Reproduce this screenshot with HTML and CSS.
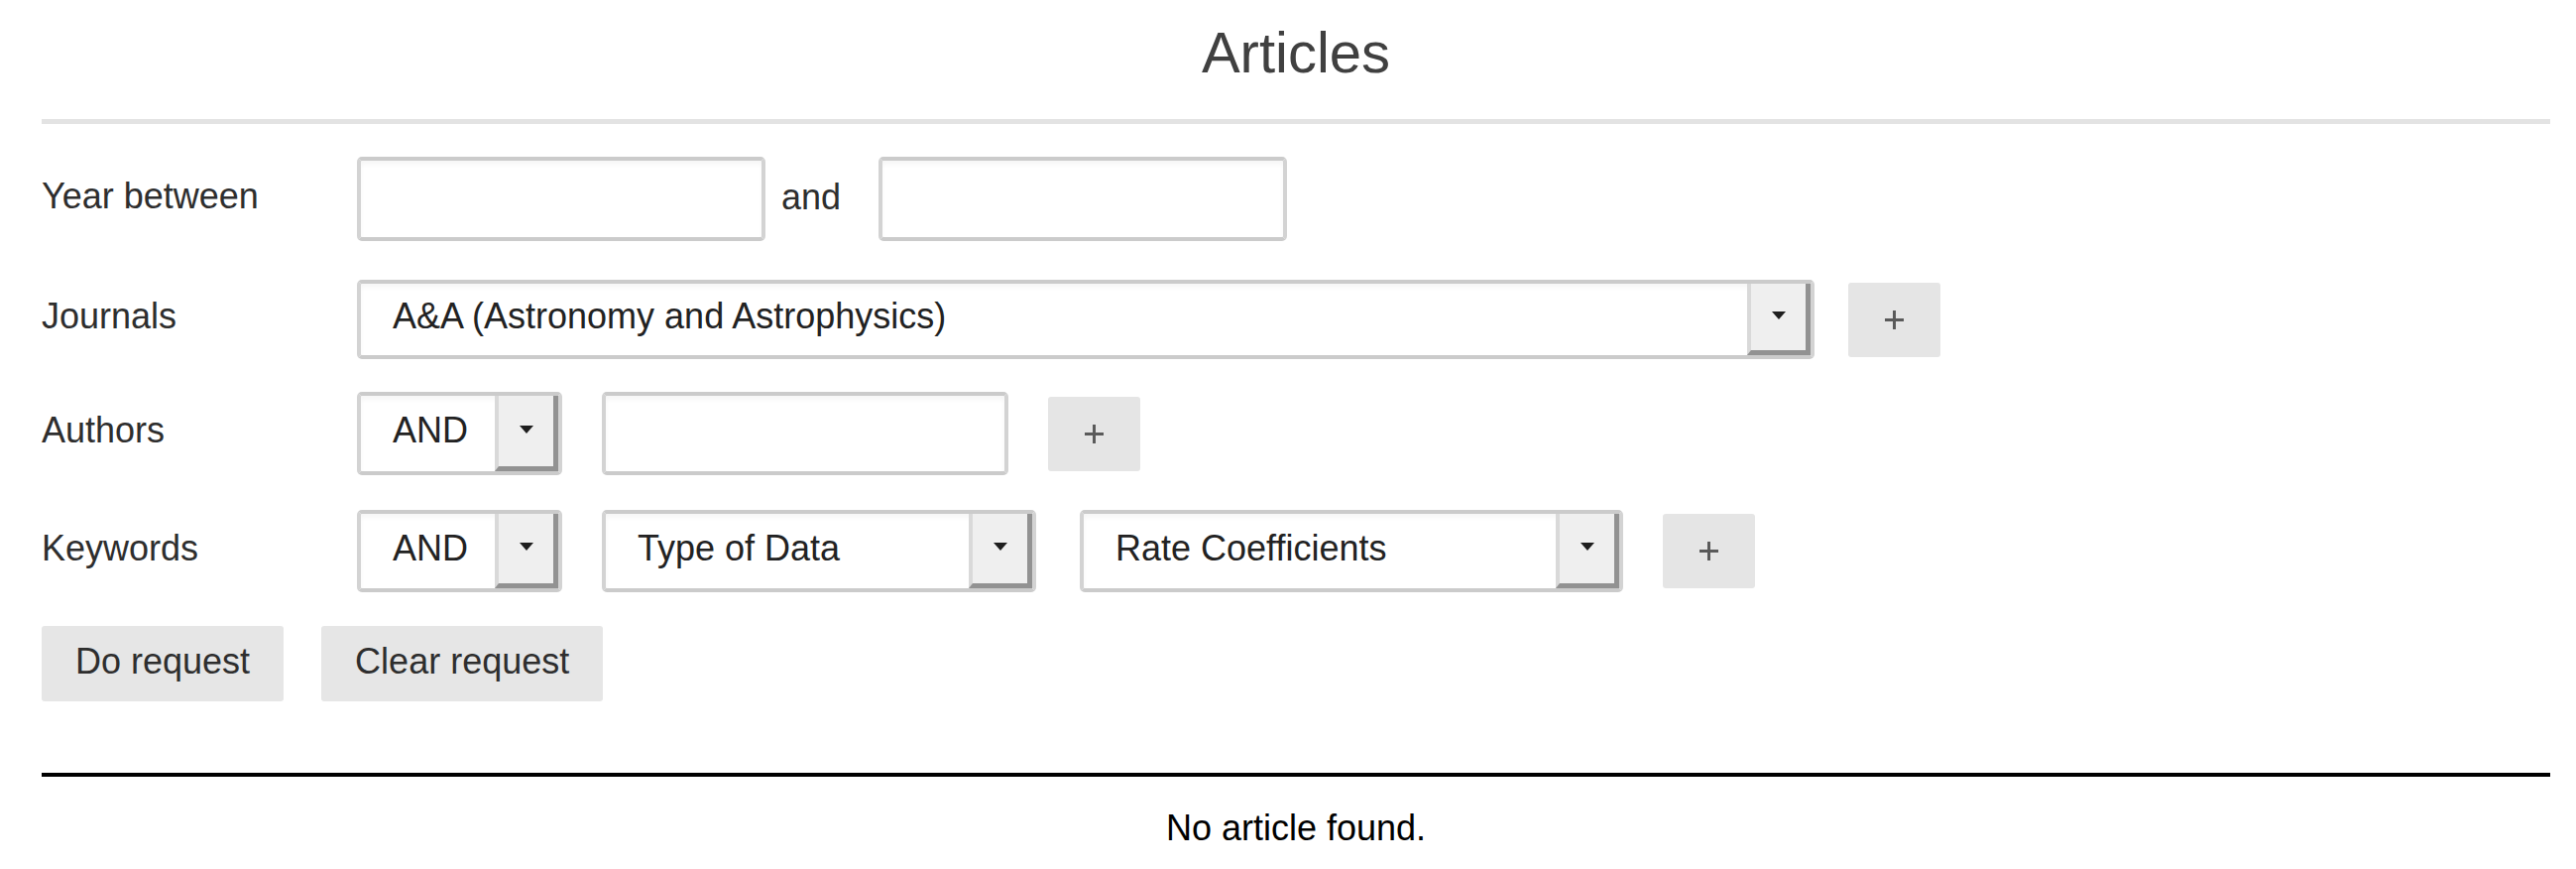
FILE: index.html
```html
<!DOCTYPE html>
<html lang="en">
<head>
<meta charset="utf-8">
<title>Articles</title>
<link rel="stylesheet" href="styles.css">
</head>
<body>
<div class="page">
  <h1 class="title">Articles</h1>
  <div class="rule"></div>

  <form class="search">
    <div class="row row-year">
      <label class="label">Year between</label>
      <input class="text-input w-year" type="text">
      <span class="and">and</span>
      <input class="text-input w-year" type="text">
    </div>

    <div class="row row-journals">
      <label class="label">Journals</label>
      <div class="select sel-journal">
        <span class="sel-text">A&amp;A (Astronomy and Astrophysics)</span>
        <span class="sel-btn"><svg width="16" height="8" viewBox="0 0 16 8"><path d="M1 0H15L8 8Z" fill="#1e1e1e"/></svg></span>
      </div>
      <button type="button" class="plus"><svg width="21" height="21" viewBox="0 0 21 21"><path d="M10.5 1V20M1 10.5H20" stroke="#5a5a5a" stroke-width="3"/></svg></button>
    </div>

    <div class="row row-authors">
      <label class="label">Authors</label>
      <div class="select sel-op">
        <span class="sel-text">AND</span>
        <span class="sel-btn"><svg width="16" height="8" viewBox="0 0 16 8"><path d="M1 0H15L8 8Z" fill="#1e1e1e"/></svg></span>
      </div>
      <input class="text-input w-author" type="text">
      <button type="button" class="plus"><svg width="21" height="21" viewBox="0 0 21 21"><path d="M10.5 1V20M1 10.5H20" stroke="#5a5a5a" stroke-width="3"/></svg></button>
    </div>

    <div class="row row-keywords">
      <label class="label">Keywords</label>
      <div class="select sel-op">
        <span class="sel-text">AND</span>
        <span class="sel-btn"><svg width="16" height="8" viewBox="0 0 16 8"><path d="M1 0H15L8 8Z" fill="#1e1e1e"/></svg></span>
      </div>
      <div class="select sel-type">
        <span class="sel-text">Type of Data</span>
        <span class="sel-btn"><svg width="16" height="8" viewBox="0 0 16 8"><path d="M1 0H15L8 8Z" fill="#1e1e1e"/></svg></span>
      </div>
      <div class="select sel-rate">
        <span class="sel-text">Rate Coefficients</span>
        <span class="sel-btn"><svg width="16" height="8" viewBox="0 0 16 8"><path d="M1 0H15L8 8Z" fill="#1e1e1e"/></svg></span>
      </div>
      <button type="button" class="plus"><svg width="21" height="21" viewBox="0 0 21 21"><path d="M10.5 1V20M1 10.5H20" stroke="#5a5a5a" stroke-width="3"/></svg></button>
    </div>

    <div class="actions">
      <button type="button" class="btn">Do request</button>
      <button type="button" class="btn">Clear request</button>
    </div>
  </form>

  <div class="black-rule"></div>
  <p class="empty">No article found.</p>
</div>
</body>
</html>
```

FILE: styles.css
```css
html, body {
  margin: 0;
  padding: 0;
  background: #fff;
}

body {
  font-family: "Liberation Sans", Arial, sans-serif;
  font-size: 36px;
  color: #2e2e2e;
}

.page {
  padding: 0 26px 0 42px;
}

.title {
  margin: 0;
  padding-top: 13px;
  font-size: 58px;
  line-height: 80px;
  font-weight: 400;
  color: #404040;
  text-align: center;
}

.rule {
  height: 5px;
  background: #e3e3e3;
  margin-top: 27px;
}

.search {
  margin-top: 33px;
}

.row {
  display: flex;
  align-items: center;
  gap: 40px;
}

.row-journals { margin-top: 39px; gap: 34px; }
.row-authors { margin-top: 33px; }
.row-keywords { margin-top: 35px; }

.label {
  width: 318px;
  flex: none;
  margin-right: -40px;
  padding-bottom: 6px;
  color: #2e2e2e;
}

.row-journals .label { margin-right: -34px; }

.text-input {
  box-sizing: border-box;
  height: 85px;
  border: 4px solid #cbcbcb;
  border-left-color: #d3d3d3;
  border-right-color: #d3d3d3;
  border-radius: 5px;
  background: #fff;
  box-shadow: inset 0 4px 4px rgba(0, 0, 0, 0.035);
  font: inherit;
  padding: 0 30px;
  outline: none;
}

.w-year { width: 412px; }
.w-author { width: 410px; height: 84px; }

.row-year { gap: 0; }
.row-year .label { margin-right: 0; }

.and {
  margin: 0 38px 0 16px;
  padding-bottom: 4px;
}

.select {
  box-sizing: border-box;
  flex: none;
  display: flex;
  height: 84px;
  border: 4px solid #cbcbcb;
  border-left-color: #d3d3d3;
  border-right-color: #d3d3d3;
  border-radius: 5px;
  background: #fff;
  box-shadow: inset 0 4px 4px rgba(0, 0, 0, 0.035);
}

.row-journals .select { height: 80px; }
.row-keywords .select { height: 83px; }

.sel-journal { width: 1470px; }
.sel-op { width: 207px; }
.sel-type { width: 438px; }
.sel-rate { width: 548px; margin-left: 4px; }

.sel-text {
  flex: 1;
  display: flex;
  align-items: center;
  padding: 0 0 6px 32px;
  white-space: nowrap;
  overflow: hidden;
  color: #222;
}

.sel-btn {
  box-sizing: border-box;
  flex: none;
  width: 64px;
  display: flex;
  align-items: center;
  justify-content: center;
  padding-bottom: 4px;
  background: #efefef;
  border-left: 4px solid #d9d9d9;
  border-right: 5px solid #929292;
  border-bottom: 5px solid #929292;
}

.plus {
  box-sizing: border-box;
  flex: none;
  width: 93px;
  height: 75px;
  padding: 0;
  border: none;
  border-radius: 3px;
  background: #e5e5e5;
  display: flex;
  align-items: center;
  justify-content: center;
}

.actions {
  display: flex;
  gap: 38px;
  margin-top: 34px;
}

.btn {
  height: 76px;
  padding: 0 34px 4px;
  border: none;
  border-radius: 3px;
  background: #e6e6e6;
  font: inherit;
  color: #2e2e2e;
}

.black-rule {
  height: 4px;
  background: #000;
  margin-top: 72px;
}

.empty {
  margin: 31px 0 0;
  text-align: center;
  color: #000;
}
```
